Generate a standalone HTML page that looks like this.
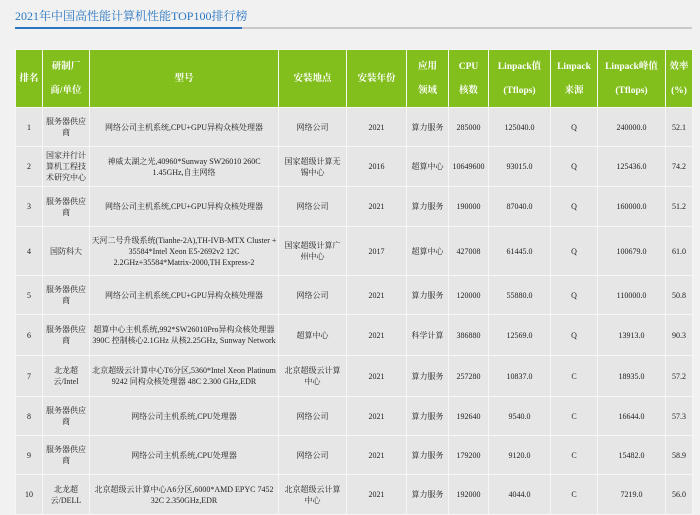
<!DOCTYPE html>
<html><head><meta charset="utf-8"><style>
body{margin:0;background:#f1f1f1;width:700px;height:505px;overflow:hidden;font-family:"Liberation Serif","Noto Serif CJK SC",serif;}
.t{position:absolute;left:15px;top:7px;font-size:12px;color:#2a78c2;font-family:"Liberation Serif","Noto Serif CJK SC",serif;}
.l1{position:absolute;left:15px;top:27px;width:227px;height:2px;background:#2a74c0;}
.l2{position:absolute;left:242px;top:27px;width:450px;height:2px;background:#c9c9c9;}
table{position:absolute;left:15px;top:49px;border-collapse:collapse;table-layout:fixed;width:677px;}
td,th{border:1px solid #f6f6f6;text-align:center;vertical-align:middle;padding:0;overflow:hidden;}
th{background:#82bf1d;color:#fff;font-size:9.5px;font-weight:bold;height:57px;line-height:24px;}
td{background:#e6e6e6;color:#222;font-size:8px;line-height:11px;}
td:nth-child(2){padding:0 3px;}
td:nth-child(3){white-space:nowrap;}
</style></head><body>
<div class="t">2021年中国高性能计算机性能TOP100排行榜</div>
<div class="l1"></div><div class="l2"></div>
<table>
<colgroup><col style="width:27px"><col style="width:47px"><col style="width:189px"><col style="width:68px"><col style="width:60px"><col style="width:42px"><col style="width:40px"><col style="width:62px"><col style="width:47px"><col style="width:68px"><col style="width:27px"></colgroup>
<tr><th>排名</th><th>研制厂<br>商/单位</th><th>型号</th><th>安装地点</th><th>安装年份</th><th>应用<br>领域</th><th>CPU<br>核数</th><th>Linpack值<br>(Tflops)</th><th>Linpack<br>来源</th><th>Linpack峰值<br>(Tflops)</th><th>效率<br>(%)</th></tr>
<tr style="height:39px"><td>1</td><td>服务器供应<br>商</td><td>网络公司主机系统,CPU+GPU异构众核处理器</td><td>网络公司</td><td>2021</td><td>算力服务</td><td>285000</td><td>125040.0</td><td>Q</td><td>240000.0</td><td>52.1</td></tr>
<tr style="height:40px"><td>2</td><td>国家并行计<br>算机工程技<br>术研究中心</td><td>神威太湖之光,40960*Sunway SW26010 260C<br>1.45GHz,自主网络</td><td>国家超级计算无<br>锡中心</td><td>2016</td><td>超算中心</td><td>10649600</td><td>93015.0</td><td>Q</td><td>125436.0</td><td>74.2</td></tr>
<tr style="height:40px"><td>3</td><td>服务器供应<br>商</td><td>网络公司主机系统,CPU+GPU异构众核处理器</td><td>网络公司</td><td>2021</td><td>算力服务</td><td>190000</td><td>87040.0</td><td>Q</td><td>160000.0</td><td>51.2</td></tr>
<tr style="height:49px"><td>4</td><td>国防科大</td><td>天河二号升级系统(Tianhe-2A),TH-IVB-MTX Cluster +<br>35584*Intel Xeon E5-2692v2 12C<br>2.2GHz+35584*Matrix-2000,TH Express-2</td><td>国家超级计算广<br>州中心</td><td>2017</td><td>超算中心</td><td>427008</td><td>61445.0</td><td>Q</td><td>100679.0</td><td>61.0</td></tr>
<tr style="height:39px"><td>5</td><td>服务器供应<br>商</td><td>网络公司主机系统,CPU+GPU异构众核处理器</td><td>网络公司</td><td>2021</td><td>算力服务</td><td>120000</td><td>55880.0</td><td>Q</td><td>110000.0</td><td>50.8</td></tr>
<tr style="height:41px"><td>6</td><td>服务器供应<br>商</td><td>超算中心主机系统,992*SW26010Pro异构众核处理器<br>390C 控制核心2.1GHz 从核2.25GHz, Sunway Network</td><td>超算中心</td><td>2021</td><td>科学计算</td><td>386880</td><td>12569.0</td><td>Q</td><td>13913.0</td><td>90.3</td></tr>
<tr style="height:41px"><td>7</td><td>北龙超<br>云/Intel</td><td>北京超级云计算中心T6分区,5360*Intel Xeon Platinum<br>9242 同构众核处理器 48C 2.300 GHz,EDR</td><td>北京超级云计算<br>中心</td><td>2021</td><td>算力服务</td><td>257280</td><td>10837.0</td><td>C</td><td>18935.0</td><td>57.2</td></tr>
<tr style="height:39px"><td>8</td><td>服务器供应<br>商</td><td>网络公司主机系统,CPU处理器</td><td>网络公司</td><td>2021</td><td>算力服务</td><td>192640</td><td>9540.0</td><td>C</td><td>16644.0</td><td>57.3</td></tr>
<tr style="height:39px"><td>9</td><td>服务器供应<br>商</td><td>网络公司主机系统,CPU处理器</td><td>网络公司</td><td>2021</td><td>算力服务</td><td>179200</td><td>9120.0</td><td>C</td><td>15482.0</td><td>58.9</td></tr>
<tr style="height:40px"><td>10</td><td>北龙超<br>云/DELL</td><td>北京超级云计算中心A6分区,6000*AMD EPYC 7452<br>32C 2.350GHz,EDR</td><td>北京超级云计算<br>中心</td><td>2021</td><td>算力服务</td><td>192000</td><td>4044.0</td><td>C</td><td>7219.0</td><td>56.0</td></tr>
</table>
</body></html>
